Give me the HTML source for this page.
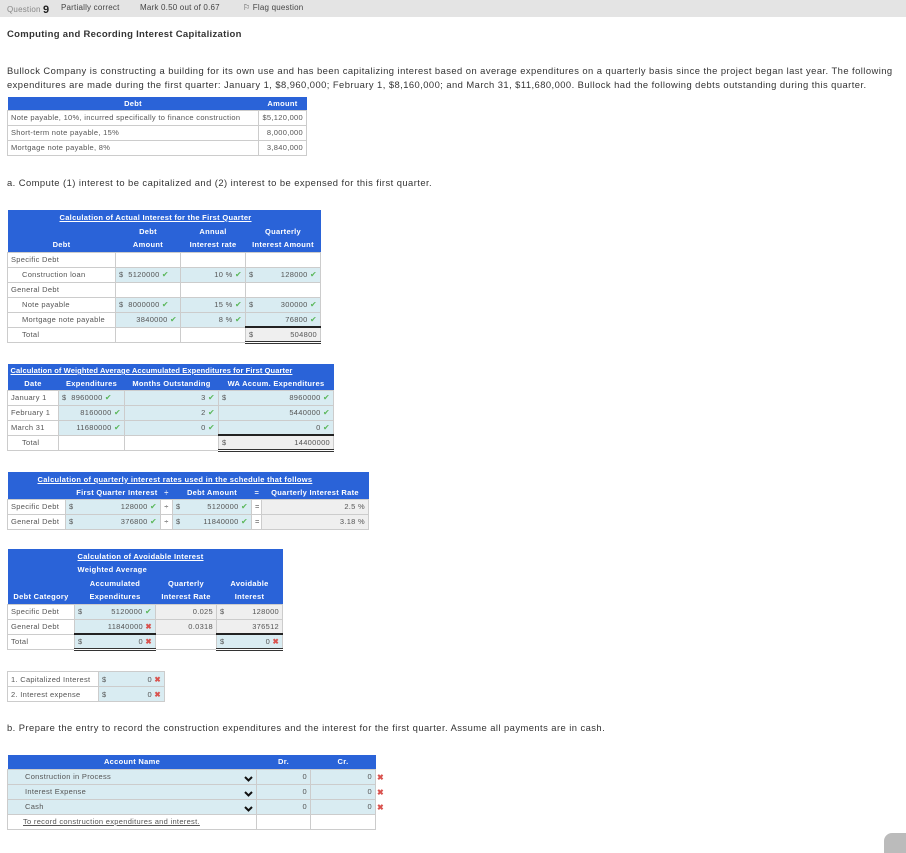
<!DOCTYPE html>
<html><head><meta charset="utf-8"><style>
*{margin:0;padding:0;box-sizing:border-box}
body{width:906px;height:844px;background:#fff;font-family:"Liberation Sans",sans-serif;color:#333;position:relative;overflow:hidden;font-size:8px}
.a{position:absolute}
.top{left:0;top:0;width:906px;height:17px;background:#e4e4e4;font-size:8px;color:#444;letter-spacing:0.2px}
.top span{position:absolute;top:3px}
table{position:absolute;border-collapse:collapse;table-layout:fixed;font-size:7.5px;letter-spacing:0.3px}
td{border:1px solid #ccc;height:15px;padding:0 3px;white-space:nowrap;overflow:hidden;color:#555}
th{background:#2a63d8;color:#fff;font-weight:bold;font-size:7.5px;border:none;padding:0 3px;white-space:nowrap}
.u{text-decoration:underline}
.bl{background:#d9ecf2}
.gr{background:#efefef}
.r{text-align:right}
.c{text-align:center}
.ok{color:#5cb85c;font-size:8px}
.x{color:#d9534f;font-weight:bold}
.dbl{border-bottom:3px double #333}
.tt{border-top:2px solid #222}
.p{font-size:9.4px;letter-spacing:0.45px;color:#333}
.chev{float:right;margin-top:4px}
</style></head><body>
<div class="a top"><span style="left:7px;color:#888">Question <b style="font-size:11px;color:#222;position:relative;top:1px">9</b></span><span style="left:61px">Partially correct</span><span style="left:140px">Mark 0.50 out of 0.67</span><span style="left:243px">⚐ Flag question</span></div>
<div class="a" style="left:7px;top:29px;font-size:9.5px;font-weight:bold;color:#333;letter-spacing:0.3px">Computing and Recording Interest Capitalization</div>
<div class="a p" style="left:7px;top:64px;width:899px;line-height:14px">Bullock Company is constructing a building for its own use and has been capitalizing interest based on average expenditures on a quarterly basis since the project began last year. The following expenditures are made during the first quarter: January 1, $8,960,000; February 1, $8,160,000; and March 31, $11,680,000. Bullock had the following debts outstanding during this quarter.</div>

<table style="left:7px;top:97px;width:299px">
<col style="width:251px"><col style="width:48px">
<tr style="height:13px"><th class="c">Debt</th><th class="c">Amount</th></tr>
<tr><td>Note payable, 10%, incurred specifically to finance construction</td><td class="r">$5,120,000</td></tr>
<tr><td>Short-term note payable, 15%</td><td class="r">8,000,000</td></tr>
<tr><td>Mortgage note payable, 8%</td><td class="r">3,840,000</td></tr>
</table>

<div class="a p" style="left:7px;top:177px">a. Compute (1) interest to be capitalized and (2) interest to be expensed for this first quarter.</div>

<table style="left:7px;top:210px;width:313px">
<col style="width:108px"><col style="width:65px"><col style="width:65px"><col style="width:75px">
<tr style="height:14px"><th colspan="4" style="padding-left:52px;text-align:left"><span class="u">Calculation of Actual Interest for the First Quarter</span></th></tr>
<tr style="height:14px"><th></th><th class="c">Debt</th><th class="c">Annual</th><th class="c">Quarterly</th></tr>
<tr style="height:14px"><th class="c">Debt</th><th class="c">Amount</th><th class="c">Interest rate</th><th class="c">Interest Amount</th></tr>
<tr><td>Specific Debt</td><td></td><td></td><td></td></tr>
<tr><td style="padding-left:14px">Construction loan</td><td class="bl">$&nbsp; 5120000 <span class="ok">✔</span></td><td class="bl r">10 % <span class="ok">✔</span></td><td class="bl">$<span style="float:right">128000 <span class="ok">✔</span></span></td></tr>
<tr><td>General Debt</td><td></td><td></td><td></td></tr>
<tr><td style="padding-left:14px">Note payable</td><td class="bl">$&nbsp; 8000000 <span class="ok">✔</span></td><td class="bl r">15 % <span class="ok">✔</span></td><td class="bl">$<span style="float:right">300000 <span class="ok">✔</span></span></td></tr>
<tr><td style="padding-left:14px">Mortgage note payable</td><td class="bl r">3840000 <span class="ok">✔</span></td><td class="bl r">8 % <span class="ok">✔</span></td><td class="bl r">76800 <span class="ok">✔</span></td></tr>
<tr><td style="padding-left:14px">Total</td><td></td><td></td><td class="gr tt dbl">$<span style="float:right">504800</span></td></tr>
</table>

<table style="left:7px;top:364px;width:326px">
<col style="width:51px"><col style="width:66px"><col style="width:94px"><col style="width:115px">
<tr style="height:13px"><th colspan="4" style="text-align:left;letter-spacing:0.1px"><span class="u">Calculation of Weighted Average Accumulated Expenditures for First Quarter</span></th></tr>
<tr style="height:13px"><th class="c">Date</th><th class="c">Expenditures</th><th class="c">Months Outstanding</th><th class="c">WA Accum. Expenditures</th></tr>
<tr><td>January 1</td><td class="bl">$&nbsp; 8960000 <span class="ok">✔</span></td><td class="bl r">3 <span class="ok">✔</span></td><td class="bl">$<span style="float:right">8960000 <span class="ok">✔</span></span></td></tr>
<tr><td>February 1</td><td class="bl r">8160000 <span class="ok">✔</span></td><td class="bl r">2 <span class="ok">✔</span></td><td class="bl r">5440000 <span class="ok">✔</span></td></tr>
<tr><td>March 31</td><td class="bl r">11680000 <span class="ok">✔</span></td><td class="bl r">0 <span class="ok">✔</span></td><td class="bl r">0 <span class="ok">✔</span></td></tr>
<tr><td style="padding-left:14px">Total</td><td></td><td></td><td class="gr tt dbl">$<span style="float:right">14400000</span></td></tr>
</table>

<table style="left:7px;top:472px;width:361px">
<col style="width:58px"><col style="width:95px"><col style="width:12px"><col style="width:79px"><col style="width:10px"><col style="width:107px">
<tr style="height:14px"><th colspan="6" style="padding-left:30px;text-align:left"><span class="u">Calculation of quarterly interest rates used in the schedule that follows</span></th></tr>
<tr style="height:13px"><th></th><th class="r">First Quarter Interest</th><th class="c">÷</th><th class="c">Debt Amount</th><th class="c">=</th><th class="c">Quarterly Interest Rate</th></tr>
<tr><td>Specific Debt</td><td class="bl">$<span style="float:right">128000 <span class="ok">✔</span></span></td><td class="c">÷</td><td class="bl">$<span style="float:right">5120000 <span class="ok">✔</span></span></td><td class="c">=</td><td class="gr r">2.5 %</td></tr>
<tr><td>General Debt</td><td class="bl">$<span style="float:right">376800 <span class="ok">✔</span></span></td><td class="c">÷</td><td class="bl">$<span style="float:right">11840000 <span class="ok">✔</span></span></td><td class="c">=</td><td class="gr r">3.18 %</td></tr>
</table>

<table style="left:7px;top:549px;width:275px">
<col style="width:67px"><col style="width:81px"><col style="width:61px"><col style="width:66px">
<tr style="height:14px"><th></th><th colspan="3" style="text-align:left"><span class="u">Calculation of Avoidable Interest</span></th></tr>
<tr style="height:13px"><th></th><th colspan="3" style="text-align:left">Weighted Average</th></tr>
<tr style="height:14px"><th></th><th class="c">Accumulated</th><th class="c">Quarterly</th><th class="c">Avoidable</th></tr>
<tr style="height:14px"><th class="c">Debt Category</th><th class="c">Expenditures</th><th class="c">Interest Rate</th><th class="c">Interest</th></tr>
<tr><td>Specific Debt</td><td class="bl">$<span style="float:right">5120000 <span class="ok">✔</span></span></td><td class="gr r">0.025</td><td class="gr">$<span style="float:right">128000</span></td></tr>
<tr><td>General Debt</td><td class="bl r">11840000 <span class="x">✖</span></td><td class="gr r">0.0318</td><td class="gr r">376512</td></tr>
<tr><td>Total</td><td class="bl tt dbl">$<span style="float:right">0 <span class="x">✖</span></span></td><td></td><td class="bl tt dbl">$<span style="float:right">0 <span class="x">✖</span></span></td></tr>
</table>

<table style="left:7px;top:671px;width:157px">
<col style="width:91px"><col style="width:66px">
<tr><td>1. Capitalized Interest</td><td class="bl">$<span style="float:right">0 <span class="x">✖</span></span></td></tr>
<tr><td>2. Interest expense</td><td class="bl">$<span style="float:right">0 <span class="x">✖</span></span></td></tr>
</table>

<div class="a p" style="left:7px;top:722px">b. Prepare the entry to record the construction expenditures and the interest for the first quarter. Assume all payments are in cash.</div>

<table style="left:7px;top:755px;width:368px">
<col style="width:249px"><col style="width:54px"><col style="width:65px">
<tr style="height:14px"><th class="c">Account Name</th><th class="c">Dr.</th><th class="c">Cr.</th></tr>
<tr><td class="bl" style="padding-left:17px">Construction in Process<svg class="chev" width="9" height="6" viewBox="0 0 9 6"><path d="M1 1 L4.5 4.5 L8 1" stroke="#111" stroke-width="2" fill="none"/></svg></td><td class="bl r">0</td><td class="bl r">0</td></tr>
<tr><td class="bl" style="padding-left:17px">Interest Expense<svg class="chev" width="9" height="6" viewBox="0 0 9 6"><path d="M1 1 L4.5 4.5 L8 1" stroke="#111" stroke-width="2" fill="none"/></svg></td><td class="bl r">0</td><td class="bl r">0</td></tr>
<tr><td class="bl" style="padding-left:17px">Cash<svg class="chev" width="9" height="6" viewBox="0 0 9 6"><path d="M1 1 L4.5 4.5 L8 1" stroke="#111" stroke-width="2" fill="none"/></svg></td><td class="bl r">0</td><td class="bl r">0</td></tr>
<tr><td style="padding-left:15px"><span class="u">To record construction expenditures and interest.</span></td><td></td><td></td></tr>
</table>
<div class="a x" style="left:377px;top:770px;font-size:8px;line-height:15px">✖<br>✖<br>✖</div>
<div class="a" style="left:884px;top:833px;width:30px;height:20px;background:#bbb;border-radius:8px 0 0 0"></div>
</body></html>
